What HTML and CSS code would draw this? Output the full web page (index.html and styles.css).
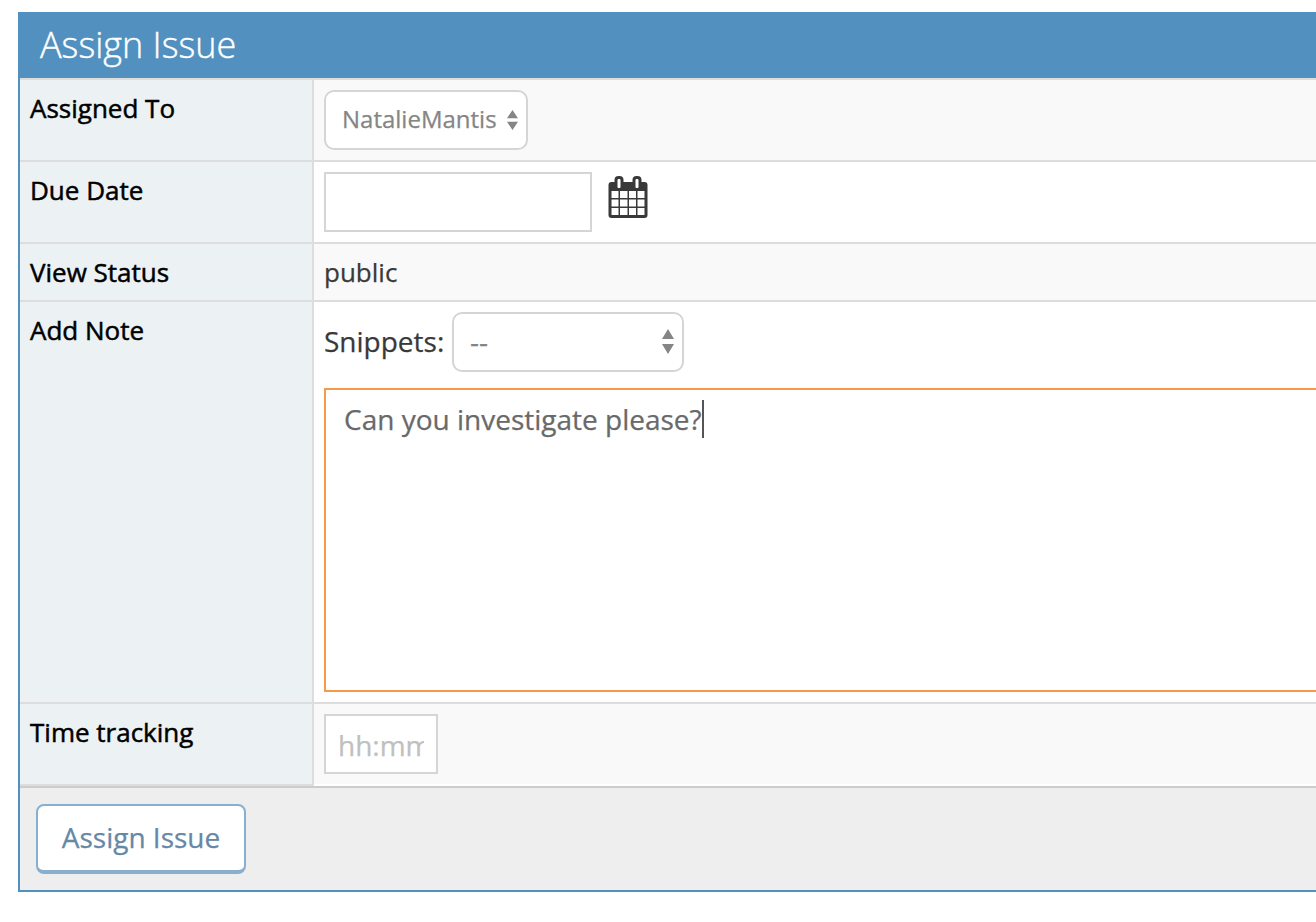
FILE: index.html
```html
<!DOCTYPE html>
<html lang="en">
<head>
<meta charset="utf-8">
<title>Assign Issue</title>
<link rel="stylesheet" href="styles.css">
</head>
<body>
<main class="panel">
  <h1 class="panel-title"><span>Assign Issue</span></h1>
  <div class="row row-field striped">
    <div class="label"><span>Assigned To</span></div>
    <div class="value">
      <div class="select select-user"><span>NatalieMantis</span>
        <svg class="arrows arrows-small" viewBox="0 0 12 22"><path d="M6 0 12 9H0ZM0 13H12L6 22Z"/></svg>
      </div>
    </div>
  </div>
  <div class="row row-field">
    <div class="label"><span>Due Date</span></div>
    <div class="value">
      <div class="input input-date"></div>
      <svg class="calendar" viewBox="0 0 40 42">
        <rect x="0.5" y="6" width="39" height="36" rx="3" fill="#393939"/>
        <path d="M3.5 15h7v7h-7zM12 15h7.5v7H12zM21 15h7v7h-7zM29.5 15h7v7h-7zM3.5 23.5h7v7h-7zM12 23.5h7.5v7H12zM21 23.5h7v7h-7zM29.5 23.5h7v7h-7zM3.5 32h7v7h-7zM12 32h7.5v7H12zM21 32h7v7h-7zM29.5 32h7v7h-7z" fill="#fff"/>
        <rect x="6.5" y="0" width="9" height="14" rx="4" fill="#393939"/>
        <rect x="24.5" y="0" width="9" height="14" rx="4" fill="#393939"/>
        <rect x="9.5" y="3" width="3" height="9" rx="1" fill="#fff"/>
        <rect x="27.5" y="3" width="3" height="9" rx="1" fill="#fff"/>
      </svg>
    </div>
  </div>
  <div class="row row-status striped">
    <div class="label"><span>View Status</span></div>
    <div class="value"><span class="status">public</span></div>
  </div>
  <div class="row row-note">
    <div class="label"><span>Add Note</span></div>
    <div class="value">
      <div class="snippets">
        <span class="snippets-label">Snippets:</span>
        <div class="select select-snippet"><span>--</span>
          <svg class="arrows" viewBox="0 0 12 25"><path d="M6 0 12 10H0ZM0 15H12L6 25Z"/></svg>
        </div>
      </div>
      <div class="note"><span class="note-text">Can you investigate please?</span><i class="caret"></i></div>
    </div>
  </div>
  <div class="row row-field row-last striped">
    <div class="label"><span>Time tracking</span></div>
    <div class="value"><div class="input input-time"><span class="placeholder">hh:mm</span></div></div>
  </div>
  <div class="footer"><button class="button" type="button"><span>Assign Issue</span></button></div>
</main>
</body>
</html>
```
FILE: styles.css
```css
* { box-sizing: border-box; }
body {
  margin: 0;
  padding: 12px 0 0 18px;
  height: 922px;
  overflow: hidden;
  background: #fff;
  color: #393939;
  font-family: "Open Sans", sans-serif;
  font-size: 26px;
  -webkit-text-stroke: 0.25px currentColor;
}
.panel { height: 880px; border: 2px solid #5291bf; border-right: 0; }
.panel-title {
  margin: 0;
  height: 64px;
  padding-left: 20px;
  background: #5291bf;
  color: #fff;
  font-size: 36px;
  font-weight: 300;
  line-height: 62px;
  -webkit-text-stroke: 0.4px #fff;
}
.row { display: flex; border-top: 2px solid #ddd; }
.row-field { height: 82px; }
.row-status { height: 58px; }
.row-note { height: 402px; }
.label {
  width: 294px;
  flex: none;
  padding: 10px;
  background: #ecf2f4;
  border-right: 2px solid #ddd;
  color: #000;
  line-height: 36px;
  -webkit-text-stroke: 0.5px #000;
}
.value { flex: 1; min-width: 0; display: flex; align-items: flex-start; padding: 10px 0 0 10px; }
.striped .value { background: #f9f9f9; }
.row-last { height: 84px; }
.row-last .label { border-bottom: 2px solid #ddd; }
.row-last .value { border-bottom: 2px solid #fff; }
.status { line-height: 36px; }
.select {
  display: flex;
  align-items: center;
  justify-content: space-between;
  height: 60px;
  border: 2px solid #d5d5d5;
  border-radius: 10px;
  background: #fff;
  color: #858585;
  font-size: 24px;
  line-height: 54px;
  padding: 0 8px 2px 16px;
}
.select-user { width: 204px; }
.select-user .arrows { margin-top: 2px; }
.select-snippet { width: 232px; font-size: 28px; }
.arrows { width: 12px; height: 25px; fill: #858585; }
.arrows-small { width: 11px; height: 22px; }
.input { height: 60px; border: 2px solid #d5d5d5; background: #fff; }
.input-date { width: 268px; }
.calendar { width: 40px; height: 42px; margin: 4px 0 0 16px; }
.row-note .value { flex-direction: column; align-items: stretch; }
.snippets { display: flex; height: 60px; margin-bottom: 16px; font-size: 28px; line-height: 58px; }
.snippets-label { width: 128px; }
.note {
  display: flex;
  height: 304px;
  padding: 10px 18px;
  border: 2px solid #f5994a;
  border-right: 0;
  color: #696969;
  font-size: 28px;
  line-height: 38px;
}
.caret { width: 2px; height: 38px; background: #555; }
.input-time { width: 114px; padding: 0 12px; color: #c0c0c0; font-size: 28px; line-height: 58px; }
.placeholder { display: block; overflow: hidden; }
.footer { height: 104px; padding: 16px; border-top: 2px solid #ccc; background: #eee; }
.button {
  display: block;
  width: 210px;
  height: 70px;
  padding: 0 0 2px;
  border: 2px solid #8aafce;
  border-bottom-width: 4px;
  border-radius: 8px;
  background: #fff;
  color: #6688a6;
  font: 28px/62px "Open Sans", sans-serif;
  -webkit-text-stroke: 0.25px currentColor;
}
```
